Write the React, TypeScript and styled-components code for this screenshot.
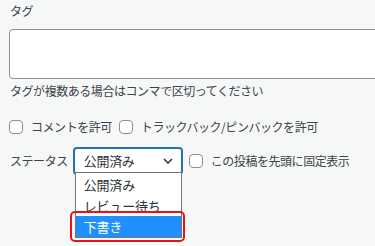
import styled, { createGlobalStyle } from 'styled-components'

const GlobalStyle = createGlobalStyle`
  html {
    overflow: hidden;
  }
  body {
    margin: 0;
    min-height: 246px;
    background: #f6f7f7;
    font-family: 'Noto Sans CJK JP', 'Noto Sans', sans-serif;
    font-size: 12px;
    color: #3c434a;
  }
`

const statuses = ['公開済み', 'レビュー待ち', '下書き']

const Checkbox = () => <Box />

const App = () => {
  return (
    <>
      <GlobalStyle />
      <Panel>
        <FieldLabel>タグ</FieldLabel>
        <TagArea />
        <Help>タグが複数ある場合はコンマで区切ってください</Help>

        <CheckRow>
          <CheckItem>
            <Checkbox />
            <span>コメントを許可</span>
          </CheckItem>
          <CheckItem>
            <Checkbox />
            <span>トラックバック/ピンバックを許可</span>
          </CheckItem>
        </CheckRow>

        <StatusRow>
          <span>ステータス</span>
          <SelectWrap>
            <Select>
              <span>公開済み</span>
              <svg width="10" height="6" viewBox="0 0 10 6">
                <path d="M1 1l4 4 4-4" fill="none" stroke="#2c3338" strokeWidth="1.5" />
              </svg>
            </Select>
            <Dropdown>
              {statuses.map((s, i) => (
                <Option key={s} $active={i === 2}>
                  {s}
                </Option>
              ))}
            </Dropdown>
            <Marker />
          </SelectWrap>
          <CheckItem>
            <Checkbox />
            <span>この投稿を先頭に固定表示</span>
          </CheckItem>
        </StatusRow>
      </Panel>
    </>
  )
}

const Panel = styled.div`
  padding: 3px 0 0 9px;
  letter-spacing: -0.45px;
  line-height: 16px;
`

const FieldLabel = styled.div`
  padding-left: 1px;
`

const TagArea = styled.div`
  margin-top: 10px;
  width: calc(100% + 20px);
  height: 48px;
  background: #fff;
  border: 1px solid #8c8f94;
  border-radius: 4px;
`

const Help = styled.div`
  margin-top: 4px;
  padding-left: 1px;
`

const CheckRow = styled.div`
  display: flex;
  align-items: center;
  gap: 7px;
  margin-top: 20px;
  height: 16px;
`

const CheckItem = styled.label`
  display: flex;
  align-items: center;
  gap: 8px;
`

const Box = styled.span`
  display: block;
  width: 12px;
  height: 12px;
  background: #fff;
  border: 1px solid #8c8f94;
  border-radius: 4px;
`

const StatusRow = styled.div`
  display: flex;
  align-items: center;
  gap: 6px;
  margin-top: 13px;
  padding-left: 1px;

  & > ${CheckItem} {
    margin-left: 1px;
  }
`

const SelectWrap = styled.div`
  position: relative;
`

const Select = styled.div`
  display: flex;
  align-items: center;
  justify-content: space-between;
  box-sizing: border-box;
  width: 108px;
  height: 26px;
  padding: 0 8px 0 9px;
  background: #fff;
  border: 1px solid #2271b1;
  box-shadow: 0 0 0 1px #2271b1;
  border-radius: 3px;
  color: #2c3338;
  font-size: 13px;
  letter-spacing: -0.3px;
`

const Dropdown = styled.ul`
  position: absolute;
  top: 24px;
  left: 1px;
  width: 105px;
  margin: 0;
  padding: 1px 0 0;
  list-style: none;
  background: #fff;
  border: 1px solid #767676;
  font-size: 13px;
  letter-spacing: -0.2px;
  z-index: 2;
`

const Option = styled.li<{ $active: boolean }>`
  height: 21px;
  line-height: 21px;
  padding-left: 8px;
  color: ${(p) => (p.$active ? '#fff' : '#2c3338')};
  background: ${(p) => (p.$active ? '#1e90ff' : 'transparent')};
`

const Marker = styled.div`
  position: absolute;
  top: 63px;
  left: -4px;
  width: 111px;
  height: 27px;
  border: 2px solid #e5141b;
  border-radius: 5px;
  z-index: 3;
`

export default App
